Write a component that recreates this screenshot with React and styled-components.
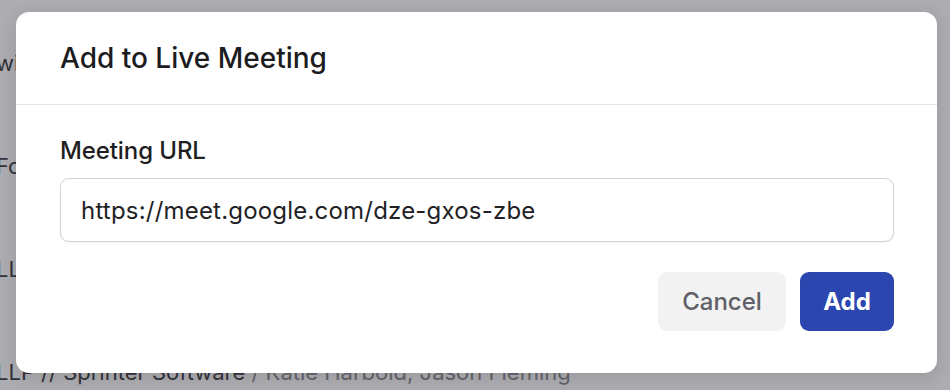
import React from 'react';
import styled, { createGlobalStyle } from 'styled-components';

const GlobalStyle = createGlobalStyle`
  html, body {
    margin: 0;
    padding: 0;
    background: #ffffff;
    font-family: Inter, "Noto Sans", sans-serif;
    overflow: hidden;
  }
`;

const Page = styled.div`
  position: relative;
  width: 950px;
  height: 390px;
  overflow: hidden;
  background: #ffffff;
`;

const List = styled.div`
  display: flex;
  flex-direction: column;
  gap: 77px;
  padding: 50px 0 0 0;
  margin-left: -4px;
`;

const ListRow = styled.div`
  font-size: 22px;
  line-height: 26px;
  color: #3a3a3e;
  white-space: nowrap;
`;

const Muted = styled.span`
  color: #8a8a90;
`;

const Overlay = styled.div`
  position: absolute;
  inset: 0;
  background: rgba(40, 38, 48, 0.38);
`;

const Modal = styled.div`
  position: absolute;
  left: 16px;
  top: 12px;
  width: 921px;
  height: 361px;
  box-sizing: border-box;
  background: #ffffff;
  border-radius: 13px;
  box-shadow: 0 4px 18px rgba(0, 0, 0, 0.12);
  display: flex;
  flex-direction: column;
`;

const Header = styled.div`
  height: 93px;
  box-sizing: border-box;
  padding: 0 44px;
  display: flex;
  align-items: center;
  border-bottom: 1px solid #e4e4e7;
`;

const Title = styled.h2`
  margin: 0;
  font-size: 28px;
  font-weight: 500;
  color: #1c1c1f;
  letter-spacing: 0;
`;

const Body = styled.div`
  padding: 31px 43px 0 44px;
  display: flex;
  flex-direction: column;
`;

const Label = styled.label`
  font-size: 24px;
  font-weight: 500;
  color: #1f1f22;
  letter-spacing: -0.1px;
  margin-bottom: 13px;
`;

const Input = styled.input`
  height: 64px;
  box-sizing: border-box;
  border: 1px solid #d2d2d8;
  border-radius: 9px;
  padding: 0 20px;
  font-family: inherit;
  font-size: 24px;
  color: #222225;
  letter-spacing: 0.2px;
  box-shadow: 0 1px 2px rgba(0, 0, 0, 0.05);
  outline: none;
`;

const Actions = styled.div`
  display: flex;
  justify-content: flex-end;
  gap: 14px;
  margin-top: 30px;
`;

const Button = styled.button`
  height: 59px;
  padding: 0 ${(p) => (p.$primary ? '22px' : '23px')};
  min-width: ${(p) => (p.$primary ? '94px' : '128px')};
  border: none;
  border-radius: 9px;
  font-family: inherit;
  font-size: 24px;
  font-weight: ${(p) => (p.$primary ? 700 : 500)};
  background: ${(p) => (p.$primary ? '#2c46b0' : '#f2f2f3')};
  color: ${(p) => (p.$primary ? '#ffffff' : '#606066')};
  cursor: pointer;
`;

export default function App() {
  return (
    <Page>
      <GlobalStyle />
      <List>
        <ListRow>with Jason Fleming</ListRow>
        <ListRow>Follow-up on renewal</ListRow>
        <ListRow>LLC // Northwind Partners</ListRow>
        <ListRow>
          LLP // Sprinter Software <Muted>/ Katie Harbold, Jason Fleming</Muted>
        </ListRow>
      </List>
      <Overlay />
      <Modal>
        <Header>
          <Title>Add to Live Meeting</Title>
        </Header>
        <Body>
          <Label htmlFor="meeting-url">Meeting URL</Label>
          <Input id="meeting-url" defaultValue="https://meet.google.com/dze-gxos-zbe" />
          <Actions>
            <Button>Cancel</Button>
            <Button $primary>Add</Button>
          </Actions>
        </Body>
      </Modal>
    </Page>
  );
}
